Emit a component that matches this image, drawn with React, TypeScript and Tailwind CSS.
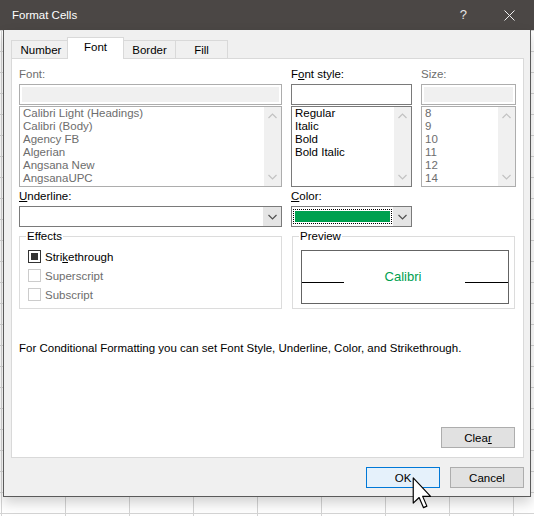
import React from "react";

const font = "font-['Liberation_Sans',Arial,sans-serif]";

function Chevron({ dir, className }: { dir: "up" | "down"; className?: string }) {
  return (
    <svg width="9" height="6" viewBox="0 0 9 6" className={className}>
      <path
        d={dir === "up" ? "M0.5 5 L4.5 1 L8.5 5" : "M0.5 1 L4.5 5 L8.5 1"}
        fill="none"
        stroke="currentColor"
        strokeWidth="1.2"
      />
    </svg>
  );
}

function ListBox({
  items,
  disabled,
  width,
}: {
  items: string[];
  disabled?: boolean;
  width: string;
}) {
  return (
    <div
      className={`${width} h-[81px] mt-px flex border bg-white ${
        disabled ? "border-[#adadad]" : "border-[#7a7a7a]"
      }`}
    >
      <div className={`flex-1 pl-[3px] ${disabled ? "text-[#6d6d6d]" : "text-black"}`}>
        {items.map((it) => (
          <div key={it} className="h-[13px] leading-[13px] whitespace-nowrap">
            {it}
          </div>
        ))}
      </div>
      <div className="w-[17px] bg-[#f0f0f0] flex flex-col items-center justify-between py-[6px] text-[#c2c2c2]">
        <Chevron dir="up" />
        <Chevron dir="down" />
      </div>
    </div>
  );
}

function TextBox({ disabled, width }: { disabled?: boolean; width: string }) {
  return (
    <div
      className={`${width} h-[21px] mt-[2px] border bg-white ${
        disabled ? "border-[#adadad] p-[2px]" : "border-[#7a7a7a]"
      }`}
    >
      {disabled && <div className="w-full h-full bg-[#f0f0f0]" />}
    </div>
  );
}

function Combo({ width, children }: { width: string; children?: React.ReactNode }) {
  return (
    <div className={`${width} h-[21px] mt-[2px] flex border border-[#7a7a7a] bg-white`}>
      <div className="flex-1 flex items-center px-[1px]">{children}</div>
      <div className="w-[18px] bg-[#e5e5e5] flex items-center justify-center text-[#505050]">
        <Chevron dir="down" />
      </div>
    </div>
  );
}

function Check({
  label,
  checked,
  disabled,
}: {
  label: React.ReactNode;
  checked?: boolean;
  disabled?: boolean;
}) {
  return (
    <div className="h-[19px] flex items-center gap-[4px]">
      <div
        className={`w-[13px] h-[13px] border flex items-center justify-center bg-white ${
          disabled ? "border-[#cccccc]" : "border-[#333333]"
        }`}
      >
        {checked && <div className="w-[7px] h-[7px] bg-[#333333]" />}
      </div>
      <span className={disabled ? "text-[#6d6d6d]" : "text-black"}>{label}</span>
    </div>
  );
}

function Group({
  title,
  width,
  children,
}: {
  title: string;
  width: string;
  children: React.ReactNode;
}) {
  return (
    <div className={`${width} h-[73px] relative border border-[#dcdcdc]`}>
      <span className="absolute -top-[9px] left-[6px] bg-white px-[1px] leading-[16px]">
        {title}
      </span>
      {children}
    </div>
  );
}

function Button({
  children,
  primary,
}: {
  children: React.ReactNode;
  primary?: boolean;
}) {
  return (
    <div
      className={`w-[74px] h-[21px] border flex items-center justify-center ${
        primary ? "bg-[#e5f1fb] border-[#0078d7]" : "bg-[#e1e1e1] border-[#adadad]"
      }`}
    >
      {children}
    </div>
  );
}

export default function App() {
  return (
    <div
      className={`${font} text-[11.5px] leading-[16px] w-[534px] h-[516px] overflow-hidden relative bg-white bg-[linear-gradient(to_right,#d4d4d4_1px,transparent_1px),linear-gradient(to_bottom,#d4d4d4_1px,transparent_1px)] bg-[size:64px_21px] bg-[position:1px_9px]`}
    >
      {/* title bar */}
      <div className="h-[30px] bg-[#4b4745] flex items-center text-white">
        <span className="ml-[12px] flex-1">Format Cells</span>
        <span className="text-[#e6e6e6] text-[13px] mr-[37px]">?</span>
        <svg width="11" height="11" viewBox="0 0 11 11" className="mr-[19px]">
          <path d="M0.5 0.5 L10.5 10.5 M10.5 0.5 L0.5 10.5" stroke="#f0f0f0" strokeWidth="1" />
        </svg>
      </div>

      {/* dialog body */}
      <div className="ml-[3px] w-[528px] h-[467px] bg-[#f0f0f0] border-x border-b border-[#5a5a5a] shadow-[0_6px_12px_rgba(0,0,0,0.18)] flex flex-col">
        {/* tabs */}
        <div className="mt-[7px] ml-[7px] h-[21px] flex items-end relative z-10">
          <div className="w-[57px] h-[18px] border border-b-0 border-[#d9d9d9] flex items-center justify-center pl-[3px]">
            Number
          </div>
          <div className="w-[57px] h-[22px] -mb-px border border-b-0 border-[#d9d9d9] bg-white flex items-center justify-center -ml-px pb-[3px]">
            Font
          </div>
          <div className="w-[53px] h-[18px] border border-b-0 border-[#d9d9d9] flex items-center justify-center -ml-px">
            Border
          </div>
          <div className="w-[53px] h-[18px] border border-b-0 border-[#d9d9d9] flex items-center justify-center -ml-px">
            Fill
          </div>
        </div>

        {/* panel */}
        <div className="ml-[7px] w-[513px] h-[400px] bg-white border border-[#d9d9d9] flex flex-col pl-[7px] pt-[7px] pr-[8px] pb-[9px]">
          <div className="flex gap-[9px]">
            <div className="flex flex-col">
              <span className="text-[#6d6d6d]">Font:</span>
              <TextBox disabled width="w-[263px]" />
              <ListBox
                disabled
                width="w-[263px]"
                items={[
                  "Calibri Light (Headings)",
                  "Calibri (Body)",
                  "Agency FB",
                  "Algerian",
                  "Angsana New",
                  "AngsanaUPC",
                ]}
              />
            </div>
            <div className="flex flex-col">
              <span>
                F<u>o</u>nt style:
              </span>
              <TextBox width="w-[121px]" />
              <ListBox width="w-[121px]" items={["Regular", "Italic", "Bold", "Bold Italic"]} />
            </div>
            <div className="flex flex-col">
              <span className="text-[#6d6d6d]">Size:</span>
              <TextBox disabled width="w-[95px]" />
              <ListBox disabled width="w-[95px]" items={["8", "9", "10", "11", "12", "14"]} />
            </div>
          </div>

          <div className="flex gap-[9px] mt-[1px]">
            <div className="flex flex-col">
              <span>
                <u>U</u>nderline:
              </span>
              <Combo width="w-[263px]" />
            </div>
            <div className="flex flex-col">
              <span>
                <u>C</u>olor:
              </span>
              <Combo width="w-[121px]">
                <div className="w-full h-[15px] border border-dotted border-black p-px">
                  <div className="w-full h-full bg-[#00a04f]" />
                </div>
              </Combo>
            </div>
          </div>

          <div className="flex gap-[10px] mt-[9px]">
            <Group title="Effects" width="w-[263px]">
              <div className="pl-[8px] pt-[10px] flex flex-col">
                <Check
                  checked
                  label={
                    <>
                      Stri<u>k</u>ethrough
                    </>
                  }
                />
                <Check disabled label="Superscript" />
                <Check disabled label="Subscript" />
              </div>
            </Group>
            <Group title="Preview" width="w-[223px]">
              <div className="mt-[13px] ml-[8px] w-[208px] h-[54px] border border-[#646464] relative flex items-center justify-center">
                <div className="absolute left-0 top-[31px] w-[42px] h-px bg-black" />
                <div className="absolute right-0 top-[31px] w-[43px] h-px bg-black" />
                <span className="text-[#00a04f] text-[13px] -ml-[4px]">Calibri</span>
              </div>
            </Group>
          </div>

          <p className="mt-[31px]">
            For Conditional Formatting you can set Font Style, Underline, Color, and Strikethrough.
          </p>

          <div className="mt-auto flex justify-end">
            <Button>
              Clea<u>r</u>
            </Button>
          </div>
        </div>

        {/* buttons */}
        <div className="mt-[9px] ml-[362px] flex gap-[10px]">
          <Button primary>OK</Button>
          <Button>Cancel</Button>
        </div>
      </div>

      {/* mouse cursor */}
      <svg
        width="21"
        height="32"
        viewBox="0 0 12 19"
        className="absolute left-[412px] top-[477px]"
      >
        <path
          d="M0.5 0.5 L0.5 15.5 L4 12.2 L6.6 18.2 L8.6 17.3 L6.1 11.5 L10.8 11.5 Z"
          fill="white"
          stroke="black"
          strokeWidth="0.7"
          strokeLinejoin="round"
        />
      </svg>
    </div>
  );
}
